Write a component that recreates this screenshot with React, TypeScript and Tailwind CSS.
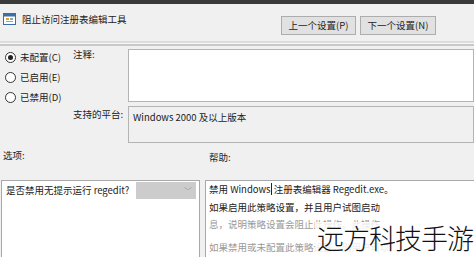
import React from "react";

const font = { fontFamily: '"Noto Sans CJK SC", "Noto Sans", sans-serif' };

function Radio({ checked, label }: { checked?: boolean; label: string }) {
  return (
    <div className="flex h-[20px] items-center gap-[4px]">
      <span className="flex h-[11px] w-[11px] items-center justify-center rounded-full border border-[#333] bg-white">
        {checked ? <span className="h-[5px] w-[5px] rounded-full bg-[#222]" /> : null}
      </span>
      <span className="text-[9.5px] text-[#222]">{label}</span>
    </div>
  );
}

export default function App() {
  return (
    <div className="relative h-[257px] w-[474px] overflow-hidden bg-[#f0f0f0] text-[9.5px] text-[#222]" style={font}>
      <div className="h-[4px] bg-[#3a3a3a]" />
      <div className="flex h-[37px] items-start">
        <div className="ml-[3px] mt-[8px] flex items-center gap-[6px]">
          <svg width="13" height="12" viewBox="0 0 13 12">
            <rect x="0.5" y="0.5" width="12" height="11" fill="#fff" stroke="#3a6ea5" />
            <rect x="0.5" y="0.5" width="12" height="3" fill="#3a6ea5" />
            <rect x="3" y="5" width="3" height="2" fill="#e0a030" />
            <rect x="7" y="5" width="3" height="2" fill="#8aa" />
            <rect x="3" y="8" width="7" height="1" fill="#8aa" />
          </svg>
          <span className="text-[9.5px]">阻止访问注册表编辑工具</span>
        </div>
        <div className="ml-auto mr-[38px] mt-[12px] flex gap-[4px]">
          <button className="h-[19px] w-[75px] border border-[#adadad] bg-[#e1e1e1] text-[9.5px] leading-none">上一个设置(P)</button>
          <button className="h-[19px] w-[76px] border border-[#adadad] bg-[#e1e1e1] text-[9.5px] leading-none">下一个设置(N)</button>
        </div>
      </div>
      <div className="h-[2px] bg-[#dcdcdc]" />
      <div className="h-[1px] bg-[#f7f7f7]" />
      <div className="h-[2px] bg-[#c8c8c8]" />
      <div className="flex h-[101px]">
        <div className="w-[73px] pl-[5px] pt-[1px]">
          <Radio checked label="未配置(C)" />
          <Radio label="已启用(E)" />
          <Radio label="已禁用(D)" />
        </div>
        <div className="w-[55px] pt-[1px] leading-[14px]">
          <div>注释:</div>
          <div className="pt-[46px]">支持的平台:</div>
        </div>
        <div className="flex flex-1 flex-col pt-[3px]">
          <div className="h-[53px] border border-[#b4b4b4] bg-white" />
          <div className="mt-[4px] h-[37px] border border-[#b4b4b4] bg-[#f0f0f0] px-[4px] pt-[3px]">Windows 2000 及以上版本</div>
        </div>
      </div>
      <div className="flex h-[33px] items-start pt-[1px]">
        <div className="w-[209px] pl-[3px]">选项:</div>
        <div className="pt-[2px]">帮助:</div>
      </div>
      <div className="flex h-[80px] gap-[5px] pl-[1px]">
        <div className="w-[199px] border border-[#a8a8a8] bg-white">
          <div className="flex h-[19px] items-center pl-[4px]">
            <span className="flex-1 whitespace-nowrap">是否禁用无提示运行 regedit?</span>
            <span className="mr-[3px] flex h-[17px] w-[60px] items-center justify-end bg-[#cccccc] pr-[4px] text-[8px] text-[#999]">﹀</span>
          </div>
        </div>
        <div className="flex-1 whitespace-nowrap border-l border-t border-[#a8a8a8] bg-white pl-[3px] leading-[17px]">
          <div>禁用 Windows<span className="inline-block h-[12px] w-[1px] translate-y-[2px] bg-[#222]" /> 注册表编辑器 Regedit.exe。</div>
          <div className="mt-[1px]">如果启用此策略设置，并且用户试图启动</div>
          <div className="text-[#999]">息，说明策略设置会阻止此操作。此操作</div>
          <div className="mt-[6px] text-[#999]">如果禁用或未配置此策略设置，则用户可以</div>
        </div>
      </div>
      <div className="absolute right-[1px] top-[222px] bg-white/80 pl-[2px] text-[27px] font-light leading-[32px] tracking-[-1px] text-[#111]">远方科技手游</div>
    </div>
  );
}
